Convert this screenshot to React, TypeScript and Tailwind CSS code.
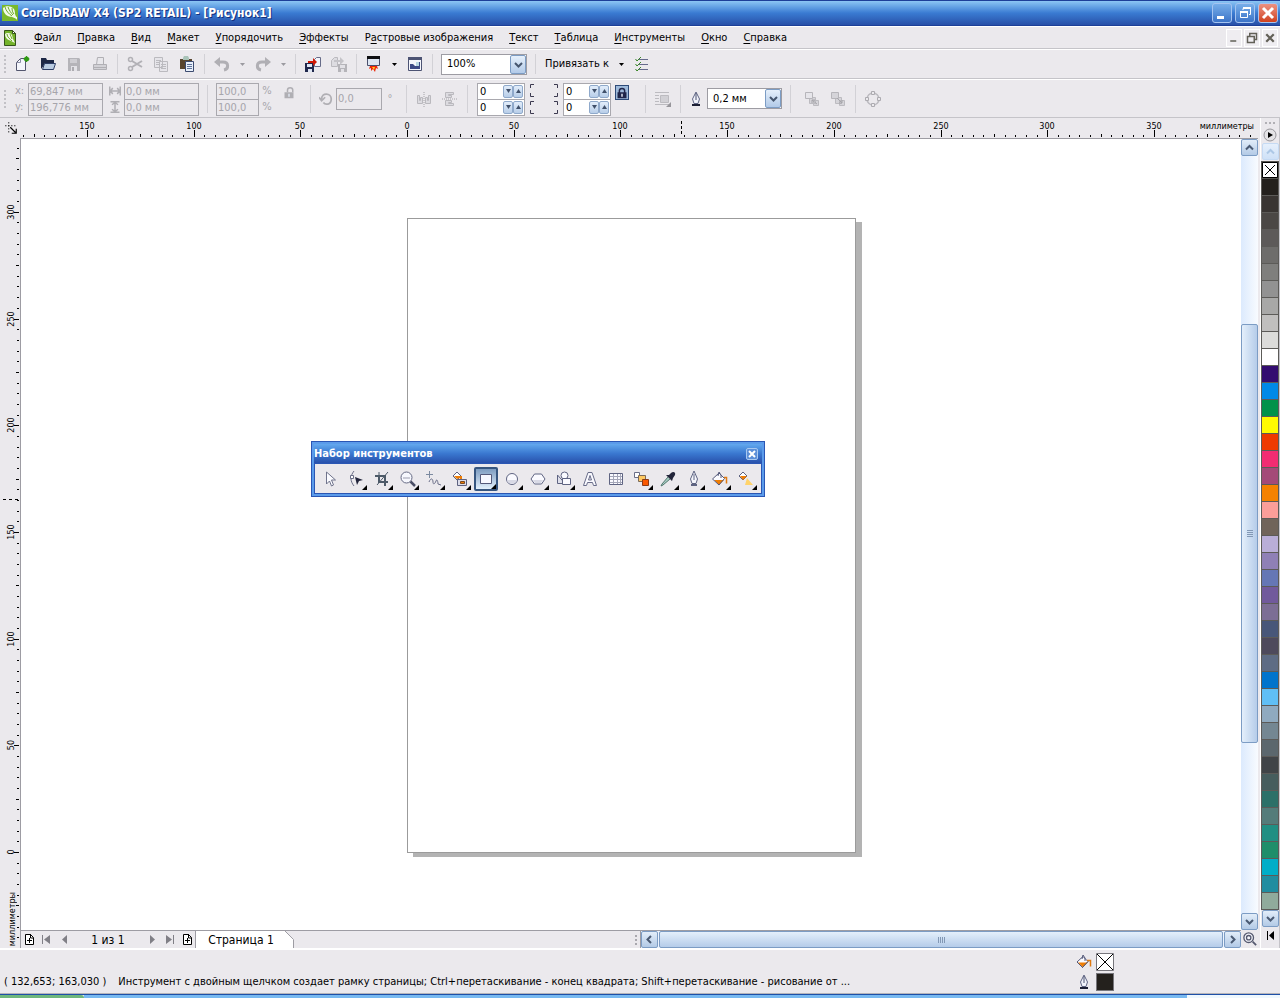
// @ts-nocheck
import React, { useState } from "react";

const MENU = [
  ["", "Ф", "айл"],
  ["", "П", "равка"],
  ["", "В", "ид"],
  ["", "М", "акет"],
  ["", "У", "порядочить"],
  ["", "Э", "ффекты"],
  ["Р", "а", "стровые изображения"],
  ["", "Т", "екст"],
  ["", "Т", "аблица"],
  ["", "И", "нструменты"],
  ["", "О", "кно"],
  ["", "С", "правка"],
];

const PALETTE = [
  "#24211d", "#393532", "#4b4845", "#5d5a59", "#6e6d6b", "#7f7f7d", "#929292", "#a8a8a7",
  "#c0bfbe", "#dcdcda", "#ffffff", "#330c70", "#0089e6", "#00924a", "#fffb00", "#ee3a00",
  "#f22c72", "#a44a78", "#f58200", "#fb9e99", "#70645a", "#b9aed8", "#8f80b6", "#6577b5",
  "#715a9c", "#7c6e95", "#485779", "#4e4a5c", "#5e6c84", "#0074cc", "#60bff5", "#8faabf",
  "#748792", "#5b676d", "#404447", "#465d5d", "#2c7068", "#547c7a", "#218f83", "#1f8e6a",
  "#00aec8", "#218da0", "#90ab9c",
];

// 50 mm on the rulers
const STEP = 106.7;
const X_TICKS = Array.from({ length: 118 }, (_, i) => i - 38);
const Y_TICKS = Array.from({ length: 80 }, (_, i) => i - 10);

function Svg({ children, size = 16 }) {
  return (
    <svg width={size} height={size} viewBox="0 0 16 16" fill="none" className="shrink-0" aria-hidden="true">
      {children}
    </svg>
  );
}

const NewIcon = () => (
  <Svg>
    <path d="M2.5 6.5l4-4h5v12h-9z" fill="#f4f5fb" stroke="#53566e" />
    <path d="M2.5 6.5h4v-4" stroke="#8a8da5" />
    <circle cx="12.5" cy="3" r="2.5" fill="#2f9a12" />
    <path d="M12.5 0v6M9.5 3h6" stroke="#2f9a12" />
  </Svg>
);
const OpenIcon = () => (
  <Svg>
    <path d="M1 13V2h5l1 2h7v4H5z" fill="#1d2746" />
    <path d="M4.5 7.5h11l-2 6h-11z" fill="#b9cbe2" stroke="#2c3c66" />
  </Svg>
);
const SaveIcon = () => (
  <Svg>
    <path d="M2 2h11l1 1v12H2z" fill="#b5b4b9" />
    <path d="M4 3h7v4H4z" fill="#cfced3" />
    <path d="M5 10h6v5H5z" fill="#e3e2e7" />
    <path d="M6 11h2v4H6z" fill="#acabb0" />
  </Svg>
);
const PrintIcon = () => (
  <Svg>
    <path d="M4.5 8.5l1-7h6v7" fill="#e8e7eb" stroke="#b0afb4" />
    <path d="M1.5 8.5h13v5h-13z" fill="#d2d1d6" stroke="#b0afb4" />
    <path d="M2 11.5h12" stroke="#b0afb4" />
  </Svg>
);
const CutIcon = () => (
  <Svg>
    <path d="M5 5l10 6M5 11l10-6" stroke="#b2b1b6" strokeWidth="2" />
    <circle cx="3.5" cy="3.5" r="2" stroke="#b2b1b6" strokeWidth="1.5" />
    <circle cx="3.5" cy="12.5" r="2" stroke="#b2b1b6" strokeWidth="1.5" />
  </Svg>
);
const CopyIcon = () => (
  <Svg>
    <path d="M1.5 1.5h8v10h-8zM6.5 5.5h8v10h-8z" fill="#e6e5ea" stroke="#bbbabf" />
    <path d="M3 4.5h5M3 6.5h3M3 8.5h3M8 8.5h5M8 10.5h5M8 12.5h5" stroke="#bbbabf" />
  </Svg>
);
const PasteIcon = () => (
  <Svg>
    <path d="M1 3h12v10H1z" fill="#58452f" />
    <path d="M4 2l1-2h4l1 2v2H4z" fill="#a9c3b8" />
    <path d="M6.5 5.5h8v10h-8z" fill="#e9f0fb" stroke="#3c4b70" />
    <path d="M8 8.5h5M8 10.5h5M8 12.5h5" stroke="#60749c" />
  </Svg>
);
const UndoIcon = () => (
  <Svg>
    <path d="M0 6l6-5v10z" fill="#b0afb4" />
    <path d="M5 6h4c6 0 6 7 1 8" stroke="#b0afb4" strokeWidth="3" />
  </Svg>
);
const RedoIcon = () => (
  <Svg>
    <path d="M16 6l-6-5v10z" fill="#b0afb4" />
    <path d="M11 6H7c-6 0-6 7-1 8" stroke="#b0afb4" strokeWidth="3" />
  </Svg>
);
const ImportIcon = () => (
  <Svg>
    <path d="M9.5 3.5l2-2h4v9h-6z" fill="#f2f4fb" stroke="#666b88" />
    <path d="M0 7h9v9H0z" fill="#20284c" />
    <path d="M2 8h5v3H2zM3 13h4v3H3z" fill="#dfe6f4" />
    <path d="M3 5h5V2l4 4-4 4V7H3z" fill="#d01804" />
  </Svg>
);
const ExportIcon = () => (
  <Svg>
    <path d="M.5 4.5l3-3h3v9h-6z" fill="#dddce1" stroke="#bab9be" />
    <path d="M7 8h9v8H7z" fill="#b5b4b9" />
    <path d="M9 9h5v3H9zM10 13h3v3h-3z" fill="#e2e1e6" />
    <path d="M3 4h6V1l4 4-4 4V6H3z" fill="#c4c3c8" />
  </Svg>
);
const LauncherIcon = () => (
  <Svg>
    <path d="M1.5 1.5h12v8h-12z" fill="#dde6f2" stroke="#4a4f6c" />
    <path d="M1 0h13v3H1z" fill="#0e0e12" />
    <path d="M4 10h7l1 3-2-1-1 4-2-3-2 2v-3l-2 1z" fill="#ec2607" />
    <path d="M6 11h3l-1 3z" fill="#ffcb22" />
  </Svg>
);
const WelcomeIcon = () => (
  <Svg>
    <path d="M1.5 1.5h13v13h-13z" fill="#f5f6fc" stroke="#4c5373" />
    <path d="M1 1h14v3H1z" fill="#4c5373" />
    <path d="M3 8h3l2 2h1V6h4v7H3z" fill="#3d4a86" />
    <path d="M9 6h3v4H9z" fill="#b9d7e2" />
  </Svg>
);
const ChecksIcon = () => (
  <Svg>
    <path d="M5 3.5h9M5 8.5h9M5 13.5h9" stroke="#666b8c" />
    <path d="M1.5 3L3 5l4-4M1.5 8L3 10l4-4M1.5 13L3 15l4-4" stroke="#388626" />
  </Svg>
);
const MirrorIcon = ({ vertical }) => (
  <Svg>
    <g transform={vertical ? "rotate(90 8 8)" : undefined}>
      <path d="M1.5 4.5v8h5v-6h-2v3h-1v-5zM14.5 4.5v8h-5v-6h2v3h1v-5z" fill="#dcdbe0" stroke="#bab9be" />
      <path d="M8 1v15" stroke="#a4a3a8" strokeDasharray="1 1" />
    </g>
  </Svg>
);
const PadlockIcon = ({ color, open = false }) => (
  <Svg size={12}>
    <path d={open ? "M6 7V4c0-4 7-4 7 0v3" : "M4.5 8V5c0-4 7-4 7 0v3"} stroke={color} strokeWidth="2" />
    <path d="M2 7h12v8H2z" fill={color} />
    <path d="M8 9v4" stroke="#dfe4ef" strokeWidth="2" />
  </Svg>
);
const PenIcon = () => (
  <Svg>
    <path d="M8 1L4.5 8 6 12.5h4L11.5 8z" fill="#f1f3fb" stroke="#5f6584" />
    <path d="M8 2v7" stroke="#4a506e" />
    <path d="M4 13h8v2H4z" fill="#1c1f35" />
  </Svg>
);
const BucketIcon = () => (
  <Svg>
    <path d="M7 2.5l5 5-5.5 6L1 8z" fill="#fbfbff" stroke="#54597a" />
    <path d="M2 8.5h10L6.5 13z" fill="#ee7d05" />
    <path d="M1 8l5.5 5.5L12 7.500" stroke="#54597a" />
    <path d="M6 5l1-4 2 3v3" stroke="#54597a" />
    <path d="M11 6.5h3.5v6" stroke="#e07a10" strokeWidth="1.5" />
  </Svg>
);
const WrapIcon = () => (
  <Svg>
    <path d="M0 1.5h14M0 4.5h4M0 7.5h4M0 10.5h4M0 13.5h14" stroke="#bcbbc0" />
    <path d="M5.500 4.500h8v7h-8z" fill="#d1d0d5" stroke="#bcbbc0" />
    <path d="M16 11v5h-5z" fill="#97969b" />
  </Svg>
);
const OrderIcon = ({ back }) => (
  <Svg>
    <path d="M9.5 9.5h5v5h-5zM5.500 6.500h6v6h-6z" fill="#d5d4d9" stroke="#bcbbc0" />
    <path d="M1.5 1.5h7v6h-7z" fill={back ? "#d5d4d9" : "#e6e5ea"} stroke="#b6b5ba" />
    <path d={back ? "M7 7l5 5M12 9v3H9" : "M13 13L8 9M8 12V9h3"} stroke="#a6a5aa" />
  </Svg>
);
const NodesIcon = () => (
  <Svg>
    <circle cx="8" cy="8" r="6" stroke="#bcbbc0" strokeWidth="1.5" />
    <path d="M6.5 .5h3v3h-3zM6.5 12.5h3v3h-3zM.5 6.5h3v3h-3zM12.5 6.5h3v3h-3z" fill="#ebe9ed" stroke="#acabb0" />
  </Svg>
);
const PageAddIcon = () => (
  <svg width="11" height="13" viewBox="0 0 11 13" fill="none" aria-hidden="true">
    <path d="M1.5 1.5h5l3 3v7h-8z" fill="#fff" stroke="#000" />
    <path d="M6.5 1v4h3M5.5 5v5M3 7.5h5" stroke="#000" />
  </svg>
);
const Balloon = () => (
  <Svg>
    <path d="M0 0h16v16H0z" fill="#79b92c" />
    <path d="M1 3c3-3 9-2 11 1 1 2 1 4 1 5l2 5-5-2C5 12 1 8 1 3z" fill="#f3faea" />
    <path d="M3 2c1 4 4 7 7 9M6 2c1 3 3 6 5 8M10 3c0 3 1 5 2 6" stroke="#6cab26" />
    <path d="M12 11l3 1v3z" fill="#f3faea" />
  </Svg>
);
const DocumentIcon = () => (
  <Svg>
    <path d="M2.5 .5h8l3 3v12h-11z" fill="#74b32a" stroke="#35551a" />
    <path d="M3 4c2-2 6-1 7 1l1 4 2 4-4-2C6 10 3 8 3 4z" fill="#f3faea" />
    <path d="M5 4c0 3 3 5 5 7M8 4l2 5" stroke="#6cab26" />
    <path d="M10.5 .5v3h3z" fill="#fff" stroke="#35551a" />
  </Svg>
);

function Chevron({ dir = "down", size = 9, color = "#46566e" }) {
  const d = {
    down: "M1 3l3.500 3.500L8 3",
    up: "M1 6.500L4.500 3 8 6.500",
    left: "M6 1L2.500 4.500 6 8",
    right: "M3 1l3.500 3.500L3 8",
  }[dir];
  return (
    <svg width={size} height={size} viewBox="0 0 9 9" fill="none" aria-hidden="true">
      <path d={d} stroke={color} strokeWidth="2" />
    </svg>
  );
}

const TOOLS = [
  {
    name: "Указатель", corner: false,
    icon: <path d="M4.5 1v12l3-3 2 5 2-1-2-5h4z" fill="#fbfbff" stroke="#70748c" />,
  },
  {
    name: "Форма", corner: true,
    icon: (
      <>
        <path d="M6 0c-4 5-4 10 0 15" stroke="#6b6f88" />
        <path d="M2.5 4.5h3v3h-3z" fill="#fff" stroke="#6b6f88" />
        <path d="M7 6l8 3-4 1-2 4z" fill="#20233a" />
      </>
    ),
  },
  {
    name: "Обрезка", corner: true,
    icon: (
      <>
        <path d="M5 5v6h9M1 5h10v10" stroke="#4d5a68" strokeWidth="2" />
        <path d="M5 1v4M3 14L14 1" stroke="#4d5a68" />
      </>
    ),
  },
  {
    name: "Масштаб", corner: true,
    icon: (
      <>
        <circle cx="6.5" cy="6.5" r="5.500" fill="#f6f7fd" stroke="#666a84" />
        <path d="M3 7h7" stroke="#c9cad6" strokeWidth="2" />
        <path d="M10.500 10.500L15 15" stroke="#4a4e66" strokeWidth="2.500" />
      </>
    ),
  },
  {
    name: "Свободная форма", corner: true,
    icon: (
      <>
        <path d="M3.5 0v7M0 3.5h7" stroke="#7c8aa0" />
        <path d="M3 11c2-5 4-3 4 0s2 2 3-1 2 1 2 3l3 1" stroke="#6a6e88" />
      </>
    ),
  },
  {
    name: "Интеллектуальная заливка", corner: true,
    icon: (
      <>
        <path d="M5 1l4 4-4 4-4-4z" fill="#fff" stroke="#5d6280" />
        <path d="M2 5h8v5H8V7L5 8z" fill="#ee7d05" />
        <path d="M5.5 8.5h9v6h-9z" fill="#dcdce8" stroke="#5d6280" />
        <path d="M8.5 10.5h4v2h-4z" fill="#ee7d05" stroke="#7a4a20" />
      </>
    ),
  },
  {
    name: "Прямоугольник", corner: true,
    icon: <path d="M2.5 3.5h11v9h-11z" fill="#f7f8ff" stroke="#54597a" />,
  },
  {
    name: "Эллипс", corner: true,
    icon: (
      <>
        <circle cx="8" cy="8" r="5.500" fill="#fafaff" stroke="#5f6482" />
        <path d="M3 9h10c-1 5-9 5-10 0z" fill="#d9dae6" />
      </>
    ),
  },
  {
    name: "Многоугольник", corner: true,
    icon: (
      <>
        <path d="M1 8l3.500-5h7L15 8l-3.500 5h-7z" fill="#fafaff" stroke="#5f6482" />
        <path d="M3 9h10l-2 3H5z" fill="#d9dae6" />
      </>
    ),
  },
  {
    name: "Основные фигуры", corner: true,
    icon: (
      <>
        <path d="M1.5 4v8.500H9z" fill="#dfe0eb" stroke="#5f6482" />
        <circle cx="8.5" cy="4.5" r="3.5" fill="#fafaff" stroke="#5f6482" />
        <path d="M6.5 7.5h8v6h-8z" fill="#fafaff" stroke="#5f6482" />
      </>
    ),
  },
  {
    name: "Текст", corner: false,
    icon: <path d="M1.5 14.5L6 1.5h4l4.500 13h-3l-1-3h-5l-1 3zM6.500 9h3L8 4.500z" fill="#fafaff" stroke="#686c88" />,
  },
  {
    name: "Таблица", corner: false,
    icon: (
      <>
        <path d="M1.5 2.5h13v11h-13z" fill="#fafaff" stroke="#5f6482" />
        <path d="M2 5.5h12M2 8.5h12M2 11.5h12M5.5 3v10M9.5 3v10M12.5 3v10" stroke="#a5a7b9" />
      </>
    ),
  },
  {
    name: "Перетекание", corner: true,
    icon: (
      <>
        <path d="M.5 1.5h5v5h-5z" fill="#fff" stroke="#6b6f88" />
        <path d="M4.5 4.5h7v6h-7z" fill="#ffc961" stroke="#7c6a58" />
        <path d="M8.5 8.5h6v6h-6z" fill="#fa5800" stroke="#8a3b18" />
      </>
    ),
  },
  {
    name: "Пипетка", corner: true,
    icon: (
      <>
        <path d="M8 6l-6 7-1 2 2-1 7-6" fill="#a6ccc2" stroke="#53776f" />
        <path d="M6 4l6 6 1-3 2-3c1-3-2-4-4-2L9 4z" fill="#22253a" />
      </>
    ),
  },
  {
    name: "Абрис", corner: true,
    icon: (
      <>
        <path d="M8 0L4.500 8 6 12.500h4L11.500 8z" fill="#f6f7fd" stroke="#5f6482" />
        <path d="M8 3v6" stroke="#5f6482" />
        <path d="M5 14h6" stroke="#5f6482" strokeWidth="2" />
      </>
    ),
  },
  {
    name: "Заливка", corner: true,
    icon: (
      <>
        <path d="M7 2l5.500 5.500L7 14 .500 8z" fill="#fbfbff" />
        <path d="M2 9h10l-5 5z" fill="#ee7d05" />
        <path d="M7 2l5.500 5.500L7 14 .500 8zM6 5l1-4 2 3v3" stroke="#54597a" />
        <path d="M12 6.500h2.500v6" stroke="#e07a10" strokeWidth="1.500" />
      </>
    ),
  },
  {
    name: "Интерактивная заливка", corner: true,
    icon: (
      <>
        <path d="M5 1l4 4-4 4-4-4z" fill="#fff" stroke="#5d6280" />
        <path d="M2 5h7L5 9z" fill="#ee7d05" />
        <path d="M9 7l6 7H7z" fill="#ffd36b" />
      </>
    ),
  },
];

function Grip() {
  return (
    <div className="flex w-[9px] shrink-0 flex-col items-center gap-[2px]">
      {[0, 1, 2, 3, 4].map((i) => (
        <i key={i} className="h-[2px] w-[2px] bg-[#c2c1c6]" />
      ))}
    </div>
  );
}

const Sep = () => <div className="mx-1 h-5 w-px shrink-0 bg-[#d2d1d6]" />;
const TallSep = () => <div className="mx-1 h-7 w-px shrink-0 bg-[#d2d1d6]" />;

function ToolButton({ label, children, disabled = false }) {
  return (
    <button type="button" aria-label={label} disabled={disabled} className="flex h-6 w-[26px] shrink-0 items-center justify-center">
      {children}
    </button>
  );
}

function DropArrow({ label, disabled = false }) {
  return (
    <button type="button" aria-label={label} disabled={disabled} className="flex h-6 w-[15px] shrink-0 items-center justify-center">
      <svg width="5" height="3" viewBox="0 0 5 3" aria-hidden="true">
        <path d="M0 0h5L2.500 3z" fill={disabled ? "#9b9aa0" : "#000"} />
      </svg>
    </button>
  );
}

function Combo({ label, value, options, width }) {
  const [current, setCurrent] = useState(value);
  return (
    <div className={`relative h-[21px] shrink-0 ${width}`}>
      <select
        aria-label={label}
        value={current}
        onChange={(e) => setCurrent(e.target.value)}
        className="h-full w-full appearance-none border border-[#9d9ca3] bg-white pl-[5px] pr-5"
      >
        {options.map((o) => (
          <option key={o}>{o}</option>
        ))}
      </select>
      <span className="pointer-events-none absolute inset-y-px right-px flex w-4 items-center justify-center rounded-xs border border-[#7c9cc4] bg-linear-to-b from-[#e6f0fb] to-[#b2cae8]">
        <Chevron />
      </span>
    </div>
  );
}

function Pair({ labels, values, width }) {
  return (
    <div className={`flex shrink-0 flex-col ${width}`}>
      {values.map((v, i) => (
        <input
          key={labels[i]}
          aria-label={labels[i]}
          defaultValue={v}
          disabled
          className="-mb-px h-[17px] w-full border border-[#a9a8ae] bg-[#ebe9ed] pl-px text-[#a6a5ab]"
        />
      ))}
    </div>
  );
}

function Spin({ label }) {
  return (
    <div className="-mb-px flex h-[17px] w-12 items-center border border-[#a9a8ae] bg-white pr-px">
      <input aria-label={label} defaultValue="0" className="h-full w-full min-w-0 pl-[2px]" />
      {["down", "up"].map((d) => (
        <button
          key={d}
          type="button"
          aria-label={`${label} ${d === "up" ? "больше" : "меньше"}`}
          className="flex h-[13px] w-[10px] shrink-0 items-center justify-center rounded-xs border border-[#8fa9cb] bg-linear-to-b from-[#e2edfa] to-[#b8cee9]"
        >
          <svg width="5" height="4" viewBox="0 0 5 4" aria-hidden="true">
            <path d={d === "up" ? "M0 4h5L2.500 0z" : "M0 0h5L2.500 4z"} fill="#40506a" />
          </svg>
        </button>
      ))}
    </div>
  );
}

function ScrollButton({ dir, label, faded = false }) {
  return (
    <button
      type="button"
      aria-label={label}
      className={`flex h-[17px] w-[17px] shrink-0 items-center justify-center rounded-xs border ${
        faded
          ? "border-[#c5daf3] bg-linear-to-b from-[#e6f0fc] to-[#cfe1f7]"
          : "border-[#7c9cc4] bg-linear-to-b from-[#e2edf9] to-[#b3cae6]"
      }`}
    >
      <Chevron dir={dir} color={faded ? "#adc8e6" : "#4a5a73"} />
    </button>
  );
}

function HorizontalRuler() {
  return (
    <div className="relative min-w-0 flex-1 overflow-hidden">
      <svg className="absolute inset-0 h-full w-full" shapeRendering="crispEdges">
        {X_TICKS.map((n) => {
          const x = Math.round(386 + (n * STEP) / 10);
          const len = n % 10 === 0 ? 7 : n % 5 === 0 ? 3 : 2;
          return <rect key={n} x={x} y={19 - len} width="1" height={len} fill="#000" />;
        })}
        <path d="M660.500 3v15" stroke="#000" strokeDasharray="3 2" />
        {[-3, -2, -1, 0, 1, 2, 3, 4, 5, 6, 7].map((n) => (
          <text key={n} x={Math.round(386 + n * STEP)} y="11" textAnchor="middle" fontSize="9">
            {Math.abs(n * 50)}
          </text>
        ))}
      </svg>
      <span className="absolute right-1 top-[2px] bg-[#ebe9ed] text-[9px] leading-3">миллиметры</span>
    </div>
  );
}

function VerticalRuler() {
  return (
    <div className="relative row-span-2 overflow-hidden border-r border-[#9d9ca3]">
      <svg className="absolute inset-0 h-full w-full" shapeRendering="crispEdges">
        {Y_TICKS.map((n) => {
          const y = Math.round(714 - (n * STEP) / 10);
          const len = n % 10 === 0 ? 5 : n % 5 === 0 ? 3 : 2;
          return <rect key={n} x={19 - len} y={y} width={len} height="1" fill="#000" />;
        })}
        <path d="M3 361.500h15" stroke="#000" strokeDasharray="3 3" />
        {[0, 1, 2, 3, 4, 5, 6].map((n) => (
          <text
            key={n}
            transform={`translate(14 ${Math.round(714 - n * STEP)}) rotate(-90)`}
            textAnchor="middle"
            fontSize="9"
          >
            {n * 50}
          </text>
        ))}
      </svg>
      <span className="absolute bottom-[2px] left-[6px] rotate-180 text-[9px] leading-3 [writing-mode:vertical-rl]">миллиметры</span>
    </div>
  );
}

function Toolbox() {
  const [active, setActive] = useState("Прямоугольник");
  return (
    <section className="absolute left-[290px] top-[302px] border border-[#2a56b4] bg-[#5b9bea] p-[2px]">
      <header className="flex h-[19px] items-center justify-between bg-linear-to-b from-[#63a8ee] via-[#3a78d0] to-[#2951ac] pr-1">
        <h2 className="font-bold text-white">Набор инструментов</h2>
        <button type="button" aria-label="Закрыть" className="flex h-3 w-3 items-center justify-center rounded-xs border border-[#a8c8f0] bg-[#5c8fd8]">
          <svg width="8" height="8" viewBox="0 0 8 8" aria-hidden="true">
            <path d="M1 1l6 6M7 1L1 7" stroke="#fff" strokeWidth="2" />
          </svg>
        </button>
      </header>
      <div className="flex h-[31px] items-center gap-[2px] border border-[#2a56b4] bg-[#ebe9ed] px-[3px]">
        {TOOLS.map((t) => (
          <button
            key={t.name}
            type="button"
            aria-label={t.name}
            aria-pressed={active === t.name}
            onClick={() => setActive(t.name)}
            className={`relative flex h-6 w-6 shrink-0 items-center justify-center rounded-xs ${
              active === t.name ? "border-2 border-[#36557f] bg-linear-to-b from-[#7d9cc0] to-[#e3f0fc]" : "border border-transparent"
            }`}
          >
            <Svg>{t.icon}</Svg>
            {t.corner && (
              <svg width="5" height="5" viewBox="0 0 5 5" className="absolute bottom-0 right-0" aria-hidden="true">
                <path d="M5 0v5H0z" fill="#000" />
              </svg>
            )}
          </button>
        ))}
      </div>
    </section>
  );
}

function TitleBar() {
  const box = "flex h-5 w-5 items-center justify-center rounded-[3px] border border-[#a5c4f0]";
  return (
    <header className="flex h-[26px] shrink-0 items-center border-y border-[#1d3f98] bg-linear-to-b from-[#8cc6f4] via-[#3a7bd2] to-[#2850a8] px-[2px]">
      <Balloon />
      <h1 className="flex-1 pl-[3px] text-[12px] font-bold text-white [text-shadow:1px_1px_0_#15307c]">
        CorelDRAW X4 (SP2 RETAIL) - [Рисунок1]
      </h1>
      <div className="flex gap-[3px]">
        <button type="button" aria-label="Свернуть" className={`${box} bg-linear-to-b from-[#77aee9] to-[#3c74c8]`}>
          <Svg><path d="M3 11h7v3H3z" fill="#fff" /></Svg>
        </button>
        <button type="button" aria-label="Восстановить" className={`${box} bg-linear-to-b from-[#77aee9] to-[#3c74c8]`}>
          <Svg>
            <path d="M6 5V3.500h7.500v6H12" stroke="#fff" />
            <path d="M6 3h8M3 7h8" stroke="#fff" strokeWidth="2" />
            <path d="M3.500 6.500h7v6h-7z" stroke="#fff" />
          </Svg>
        </button>
        <button type="button" aria-label="Закрыть" className={`${box} bg-linear-to-b from-[#ec9180] to-[#d0401a]`}>
          <Svg><path d="M3 3l10 10M13 3L3 13" stroke="#fff" strokeWidth="3" /></Svg>
        </button>
      </div>
    </header>
  );
}

function MenuBar() {
  const box = "flex h-[18px] w-4 items-center justify-center border border-white bg-[#efedf1]";
  return (
    <nav className="flex h-[23px] shrink-0 items-center border-b border-t border-b-[#c5c4c9] border-t-white px-[2px] pt-px">
      <DocumentIcon />
      <div className="flex flex-1 pl-2">
        {MENU.map(([pre, key, rest]) => (
          <button key={key + rest} type="button" className="px-2">
            {pre}
            <span className="underline underline-offset-2">{key}</span>
            {rest}
          </button>
        ))}
      </div>
      <div className="flex gap-[2px]">
        <button type="button" aria-label="Свернуть документ" className={box}>
          <Svg size={12}><path d="M3 11h8v2H3z" fill="#626057" /></Svg>
        </button>
        <button type="button" aria-label="Восстановить документ" className={box}>
          <Svg size={12}><path d="M5 5V2h9v8h-3M2 6h9v8H2z" stroke="#626057" strokeWidth="2" /></Svg>
        </button>
        <button type="button" aria-label="Закрыть документ" className={box}>
          <Svg size={12}><path d="M3 3l10 10M13 3L3 13" stroke="#626057" strokeWidth="3" /></Svg>
        </button>
      </div>
    </nav>
  );
}

function StandardBar() {
  return (
    <div className="flex h-[30px] shrink-0 items-center border-b border-t border-b-[#c5c4c9] border-t-white">
      <Grip />
      <ToolButton label="Создать"><NewIcon /></ToolButton>
      <ToolButton label="Открыть"><OpenIcon /></ToolButton>
      <ToolButton label="Сохранить" disabled><SaveIcon /></ToolButton>
      <ToolButton label="Печать" disabled><PrintIcon /></ToolButton>
      <Sep />
      <ToolButton label="Вырезать" disabled><CutIcon /></ToolButton>
      <ToolButton label="Копировать" disabled><CopyIcon /></ToolButton>
      <ToolButton label="Вставить"><PasteIcon /></ToolButton>
      <Sep />
      <ToolButton label="Отменить" disabled><UndoIcon /></ToolButton>
      <DropArrow label="Список отмены" disabled />
      <ToolButton label="Повторить" disabled><RedoIcon /></ToolButton>
      <DropArrow label="Список повтора" disabled />
      <Sep />
      <ToolButton label="Импорт"><ImportIcon /></ToolButton>
      <ToolButton label="Экспорт" disabled><ExportIcon /></ToolButton>
      <Sep />
      <ToolButton label="Запуск приложений"><LauncherIcon /></ToolButton>
      <DropArrow label="Список приложений" />
      <ToolButton label="Экран приветствия"><WelcomeIcon /></ToolButton>
      <Sep />
      <div className="px-1">
        <Combo label="Масштаб" value="100%" options={["50%", "100%", "200%"]} width="w-[86px]" />
      </div>
      <Sep />
      <button type="button" className="px-[5px]">Привязать к</button>
      <DropArrow label="Параметры привязки" />
      <ToolButton label="Параметры"><ChecksIcon /></ToolButton>
    </div>
  );
}

function PropertyBar() {
  return (
    <div className="flex h-[39px] shrink-0 items-center border-b border-t border-b-[#c5c4c9] border-t-white text-[#a6a5ab]">
      <Grip />
      <div className="flex w-[19px] shrink-0 flex-col pl-[6px] leading-4">
        <span>x:</span>
        <span>y:</span>
      </div>
      <Pair labels={["Положение x", "Положение y"]} values={["69,847 мм", "196,776 мм"]} width="w-[75px]" />
      <div className="flex w-[21px] shrink-0 flex-col items-center gap-1 pl-[3px]">
        <Svg size={12}><path d="M1 2v12M15 2v12M2 8h12M5 4L2 8l3 4M11 4l3 4-3 4" stroke="#b0afb4" strokeWidth="2" /></Svg>
        <Svg size={12}><path d="M2 1h12M2 15h12M8 2v12M4 5l4-3 4 3M4 11l4 3 4-3" stroke="#b0afb4" strokeWidth="2" /></Svg>
      </div>
      <Pair labels={["Ширина", "Высота"]} values={["0,0 мм", "0,0 мм"]} width="w-[75px]" />
      <div className="px-1"><TallSep /></div>
      <Pair labels={["Масштаб по ширине", "Масштаб по высоте"]} values={["100,0", "100,0"]} width="w-[43px]" />
      <div className="flex w-4 shrink-0 flex-col items-center leading-4">
        <span>%</span>
        <span>%</span>
      </div>
      <div className="mb-3 flex w-[27px] shrink-0 justify-center"><PadlockIcon color="#b0afb4" open /></div>
      <div className="px-1"><TallSep /></div>
      <Svg size={14}><path d="M3 8c0-8 11-7 11 0s-7 7-9 4M0 6l3 4 4-4" stroke="#b0afb4" strokeWidth="2" /></Svg>
      <input
        aria-label="Угол поворота"
        defaultValue="0,0"
        disabled
        className="ml-[3px] h-[22px] w-[46px] shrink-0 border border-[#a9a8ae] bg-[#ebe9ed] pl-px text-[#a6a5ab]"
      />
      <span className="w-4 shrink-0 text-center">°</span>
      <div className="pl-1"><TallSep /></div>
      <ToolButton label="Отразить по горизонтали" disabled><MirrorIcon vertical={false} /></ToolButton>
      <ToolButton label="Отразить по вертикали" disabled><MirrorIcon vertical /></ToolButton>
      <TallSep />
      <div className="flex shrink-0 items-center gap-1 pl-[5px] pr-1 text-black">
        <div className="flex flex-col"><Spin label="Левый верхний угол" /><Spin label="Левый нижний угол" /></div>
        <svg width="30" height="32" viewBox="0 0 30 32" fill="none" stroke="#3c3a50" aria-hidden="true">
          <path d="M5 1.500H1.500V5M1.500 10v3.500H5M25 1.500h3.500V5M28.500 10v3.500H25M5 18.500H1.500V22M1.500 27v3.500H5M25 18.500h3.500V22M28.500 27v3.500H25" />
        </svg>
        <div className="flex flex-col"><Spin label="Правый верхний угол" /><Spin label="Правый нижний угол" /></div>
        <button type="button" aria-label="Скруглять вместе" className="mb-3 flex h-[15px] w-[14px] items-center justify-center border border-[#2d4a78] bg-[#9db9da]">
          <PadlockIcon color="#20264a" />
        </button>
      </div>
      <div className="pl-2"><TallSep /></div>
      <ToolButton label="Обтекание текстом" disabled><WrapIcon /></ToolButton>
      <TallSep />
      <div className="flex w-[22px] shrink-0 justify-center"><PenIcon /></div>
      <div className="text-black"><Combo label="Толщина абриса" value="0,2 мм" options={["0,1 мм", "0,2 мм", "0,5 мм"]} width="w-[75px]" /></div>
      <div className="px-1"><TallSep /></div>
      <ToolButton label="На передний план" disabled><OrderIcon back={false} /></ToolButton>
      <ToolButton label="На задний план" disabled><OrderIcon back /></ToolButton>
      <TallSep />
      <ToolButton label="Преобразовать в кривые" disabled><NodesIcon /></ToolButton>
    </div>
  );
}

function PageTabs() {
  const nav = "flex h-4 w-[18px] items-center justify-center";
  return (
    <div className="flex min-w-0 border-t border-[#9d9ca3]">
      <div className="flex flex-1 items-center text-[12px]">
        <button type="button" aria-label="Добавить страницу в начало" className="flex w-4 justify-center"><PageAddIcon /></button>
        <button type="button" aria-label="Первая страница" className={nav}>
          <svg width="8" height="9" viewBox="0 0 8 9"><path d="M0 0h1v9H0zM8 0v9L2 4.500z" fill="#807f86" /></svg>
        </button>
        <button type="button" aria-label="Предыдущая страница" className={nav}>
          <svg width="5" height="9" viewBox="0 0 5 9"><path d="M5 0v9L0 4.500z" fill="#807f86" /></svg>
        </button>
        <span className="w-[70px] text-center">1 из 1</span>
        <button type="button" aria-label="Следующая страница" className={nav}>
          <svg width="5" height="9" viewBox="0 0 5 9"><path d="M0 0v9l5-4.500z" fill="#807f86" /></svg>
        </button>
        <button type="button" aria-label="Последняя страница" className={nav}>
          <svg width="8" height="9" viewBox="0 0 8 9"><path d="M7 0h1v9H7zM0 0v9l6-4.500z" fill="#807f86" /></svg>
        </button>
        <button type="button" aria-label="Добавить страницу в конец" className="flex w-4 justify-center"><PageAddIcon /></button>
        <button type="button" className="relative h-full w-[99px] border-l border-[#9d9ca3] bg-white pr-2">
          Страница 1
          <svg width="9" height="17" viewBox="0 0 9 17" className="absolute right-0 top-0" fill="none" aria-hidden="true">
            <path d="M0 0h9v9z" fill="#ebe9ed" />
            <path d="M0 0l8.500 8.500V17" stroke="#9d9ca3" />
          </svg>
        </button>
      </div>
      <div className="flex w-1/2 shrink-0 bg-[#edf4fe]">
        <div className="flex w-[10px] flex-col items-center justify-center gap-[2px] border-r border-[#9d9ca3] bg-[#ebe9ed]">
          {[0, 1, 2].map((i) => <i key={i} className="h-[2px] w-[2px] bg-[#a9a8ae]" />)}
        </div>
        <ScrollButton dir="left" label="Прокрутить влево" />
        <div className="mx-px flex flex-1 items-center justify-center gap-px rounded-xs border border-[#7c9cc4] bg-linear-to-b from-[#e4effb] to-[#b5cce9]">
          {[0, 1, 2, 3].map((i) => <i key={i} className="h-[6px] w-px bg-[#8298b5]" />)}
        </div>
        <ScrollButton dir="right" label="Прокрутить вправо" />
      </div>
    </div>
  );
}

function Palette() {
  return (
    <aside className="flex w-5 shrink-0 flex-col items-center border-x border-l-white border-r-[#c5c4c9] bg-[#ebe9ed]">
      <div className="flex h-[9px] items-center gap-[2px]">
        {[0, 1, 2].map((i) => <i key={i} className="h-[2px] w-[2px] bg-[#b1b0b5]" />)}
      </div>
      <button type="button" aria-label="Меню палитры" className="flex h-4 w-[14px] items-center justify-center">
        <svg width="14" height="14" viewBox="0 0 14 14" aria-hidden="true">
          <circle cx="7" cy="7" r="6" fill="#e4e3e6" stroke="#98979c" />
          <path d="M5 4v6l5-3z" fill="#000" />
        </svg>
      </button>
      <ScrollButton dir="up" label="Палитра вверх" faded />
      <button type="button" aria-label="Нет цвета" className="mt-px flex h-[18px] w-[18px] items-center justify-center bg-[#55544f]">
        <svg width="16" height="16" viewBox="0 0 16 16" aria-hidden="true">
          <path d="M.5 .5h15v15H.5z" fill="#fff" stroke="#000" />
          <path d="M3 3l10 10M13 3L3 13" stroke="#000" />
        </svg>
      </button>
      <div className="flex w-[18px] flex-col">
        {PALETTE.map((c) => (
          <button key={c} type="button" aria-label={c} className="h-[17px] border-x border-b border-[#5c5b58]" style={{ backgroundColor: c }} />
        ))}
      </div>
      <ScrollButton dir="down" label="Палитра вниз" />
      <button type="button" aria-label="Развернуть палитру" className="flex h-4 w-4 items-center justify-center">
        <svg width="7" height="9" viewBox="0 0 7 9"><path d="M0 0h1v9H0zM7 0v9L2 4.500z" fill="#000" /></svg>
      </button>
    </aside>
  );
}

function StatusBar() {
  return (
    <footer className="flex h-[44px] shrink-0 justify-between border-b border-[#b5b4b9] bg-[#ebe9ed]">
      <div className="flex items-end gap-3 pb-[3px] pl-1">
        <span>( 132,653; 163,030 )</span>
        <span>Инструмент с двойным щелчком создает рамку страницы; Ctrl+перетаскивание - конец квадрата; Shift+перетаскивание - рисование от ...</span>
      </div>
      <div className="flex w-[204px] flex-col gap-[2px] pt-[3px]">
        <div className="flex items-center gap-1">
          <BucketIcon />
          <svg width="18" height="18" viewBox="0 0 18 18" aria-hidden="true">
            <path d="M.5 .5h17v17H.5z" fill="#fff" stroke="#77767c" />
            <path d="M1 1l16 16M17 1L1 17" stroke="#000" />
          </svg>
        </div>
        <div className="flex items-center gap-1">
          <PenIcon />
          <div className="h-[18px] w-[18px] border border-[#77767c] bg-[#24211d]" />
        </div>
      </div>
    </footer>
  );
}

export default function App() {
  return (
    <div className="flex h-screen flex-col overflow-hidden whitespace-nowrap bg-[#ebe9ed] font-['DejaVu_Sans_Condensed','DejaVu_Sans',sans-serif] text-[11px] leading-4 text-black">
      <TitleBar />
      <MenuBar />
      <StandardBar />
      <PropertyBar />

      <div className="flex min-h-0 flex-1 border-b-2 border-white">
        <main className="mr-[2px] flex min-w-0 flex-1 flex-col">
          <div className="flex h-5 shrink-0">
            <button type="button" aria-label="Начало координат" className="flex w-[21px] shrink-0 items-center justify-center">
              <Svg size={12}>
                <path d="M5 0v16M0 5h16" stroke="#000" strokeDasharray="2 2" />
                <path d="M7 7l7 7M15 9v6H9" stroke="#000" strokeWidth="1.500" />
              </Svg>
            </button>
            <HorizontalRuler />
          </div>
          <div className="grid min-h-0 flex-1 grid-cols-[21px_minmax(0,1fr)_17px] grid-rows-[minmax(0,1fr)_18px]">
            <VerticalRuler />
            <div className="relative overflow-hidden border-t border-[#9d9ca3] bg-white">
              <div className="absolute left-[386px] top-[79px] h-[635px] w-[449px] border border-[#9b9b9b] bg-white shadow-[6px_4px_0_#b3b3b3]" />
              <Toolbox />
            </div>
            <div className="flex flex-col border-t border-[#9d9ca3] bg-linear-to-r from-[#dceafd] to-[#f8fbff]">
              <ScrollButton dir="up" label="Прокрутить вверх" />
              <div className="flex-[169]" />
              <div className="flex flex-[419] flex-col items-center justify-center gap-px rounded-xs border border-[#7c9cc4] bg-linear-to-r from-[#e4effb] to-[#b5cce9]">
                {[0, 1, 2, 3].map((i) => <i key={i} className="h-px w-[6px] bg-[#8298b5]" />)}
              </div>
              <div className="flex-[171]" />
              <ScrollButton dir="down" label="Прокрутить вниз" />
            </div>
            <PageTabs />
            <button type="button" aria-label="Навигатор" className="flex items-center justify-center">
              <Svg size={14}>
                <circle cx="6.5" cy="6.5" r="5.500" fill="#f3f4fa" stroke="#55596f" strokeWidth="1.500" />
                <circle cx="6.5" cy="6.5" r="2.500" stroke="#55596f" strokeWidth="1.500" />
                <path d="M11 11l4 4" stroke="#55596f" strokeWidth="2" />
              </Svg>
            </button>
          </div>
        </main>
        <Palette />
      </div>

      <StatusBar />
      <div className="flex h-1 shrink-0 border-t border-[#1e50a8]">
        <div className="w-[84px] rounded-tr-sm bg-[#6fb77c]" />
        <div className="flex-1 bg-[#78b9f0]" />
        <div className="w-[93px] bg-[#eff8fe]" />
      </div>
    </div>
  );
}
